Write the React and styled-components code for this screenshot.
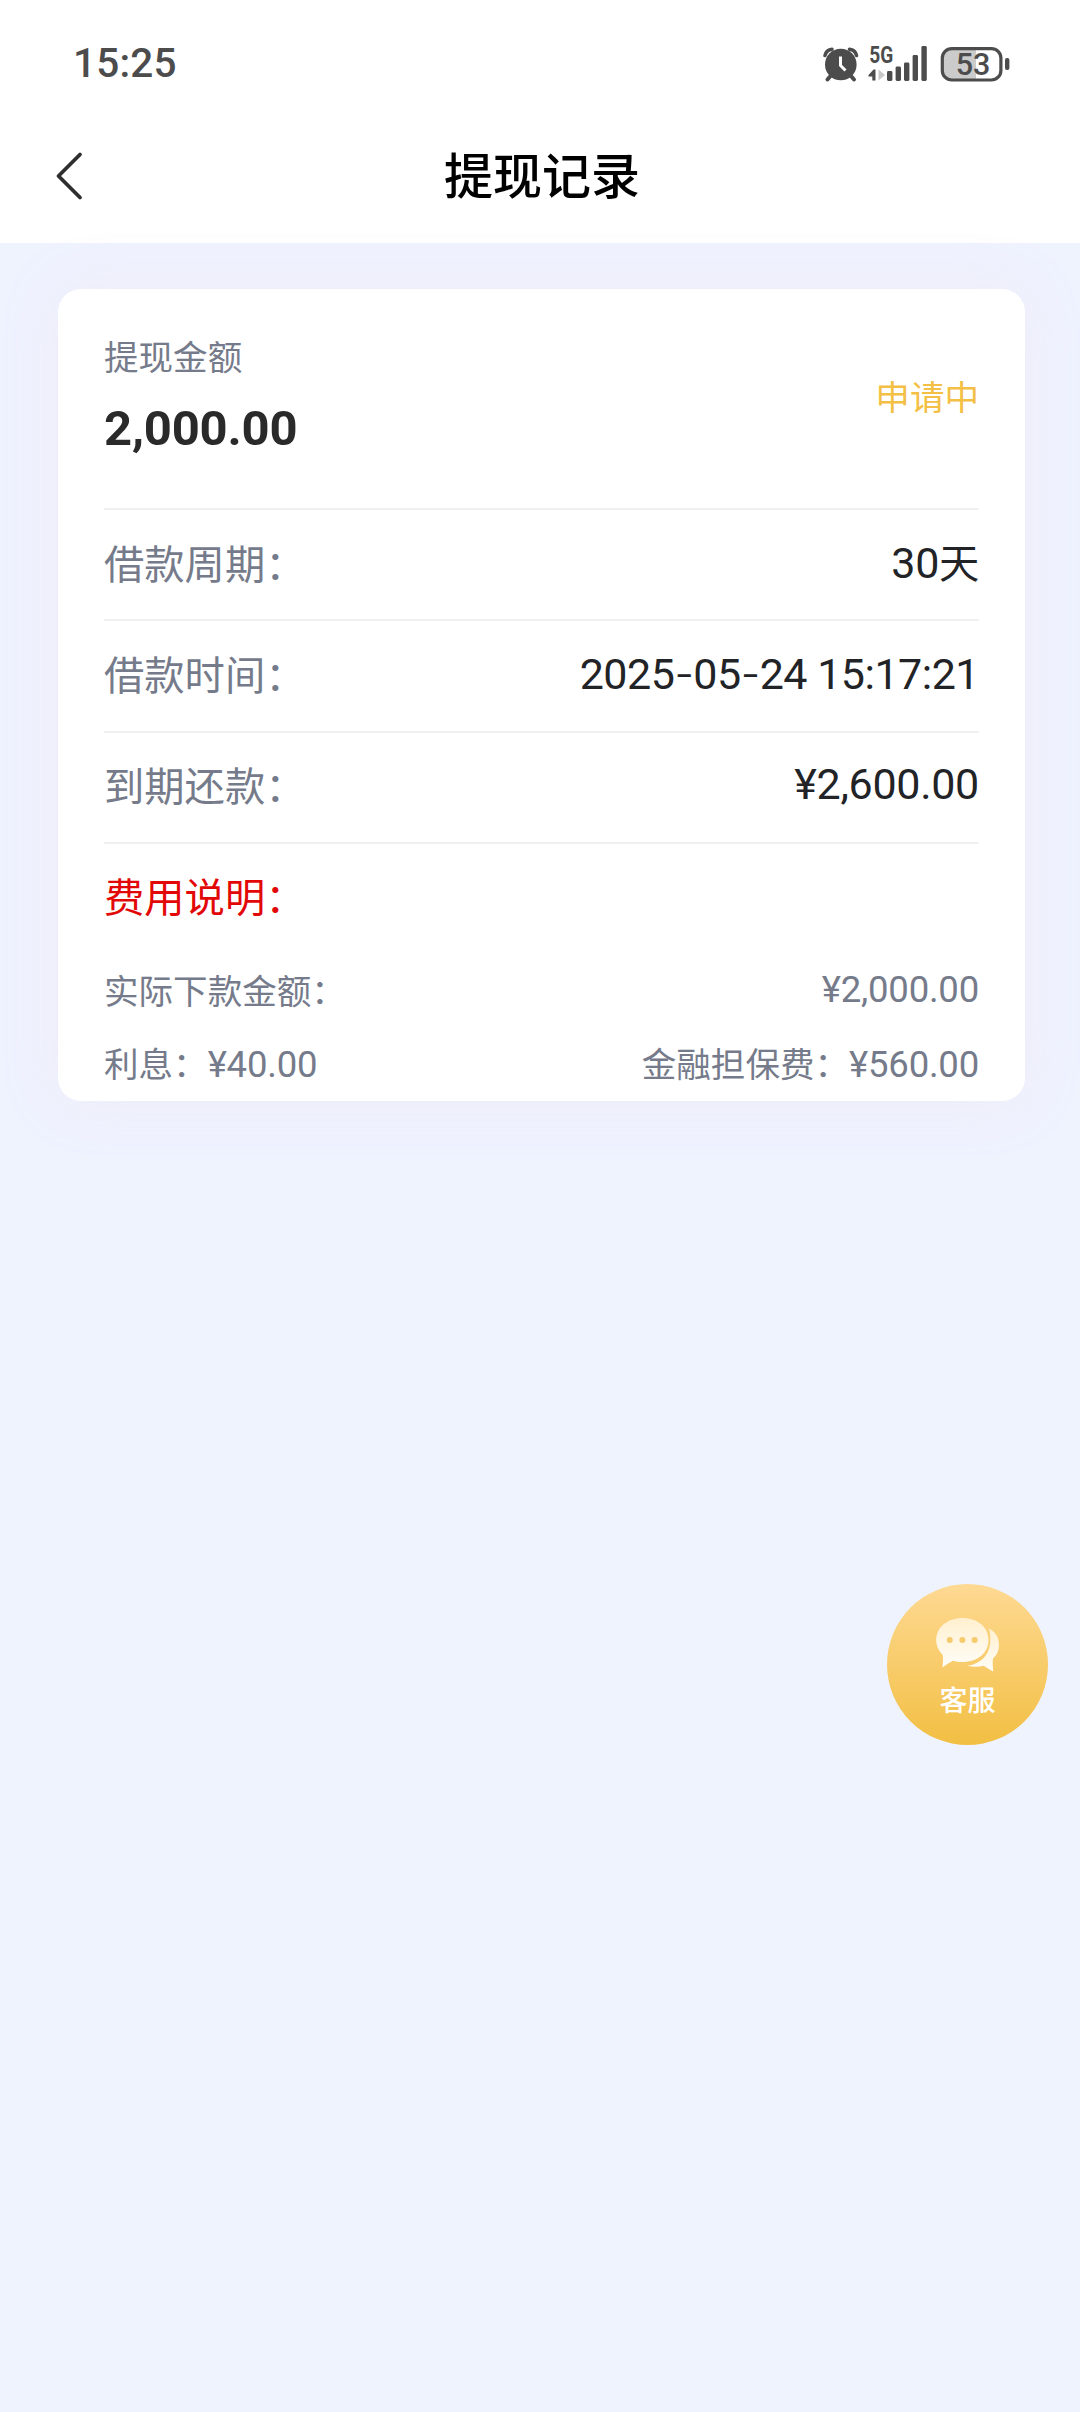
import styled, { createGlobalStyle } from "styled-components";

const details = [
  { label: "借款周期：", value: "30", unit: "天" },
  { label: "借款时间：", date: ["2025", "05", "24"], time: "15:17:21" },
  { label: "到期还款：", value: "¥2,600.00" },
];

const App = () => {
  return (
    <Page>
      <GlobalStyle />
      <TopArea>
        <StatusBar>
          <Clock>15:25</Clock>
          <StatusIcons />
        </StatusBar>
        <NavBar>
          <BackButton aria-label="返回">
            <svg width="30" height="50" viewBox="0 0 30 50" fill="none">
              <path
                d="M26 3.5 L4.5 25 L26 46.5"
                stroke="#2e2e2e"
                strokeWidth="3.8"
                strokeLinecap="round"
                strokeLinejoin="round"
              />
            </svg>
          </BackButton>
          <Title>提现记录</Title>
        </NavBar>
      </TopArea>

      <Card>
        <Summary>
          <div>
            <SummaryLabel>提现金额</SummaryLabel>
            <Amount>2,000.00</Amount>
          </div>
          <Status>申请中</Status>
        </Summary>

        {details.map((item) => (
          <Row key={item.label}>
            <Label>{item.label}</Label>
            {item.date ? (
              <DateValue>
                {item.date[0]}
                <Dash>-</Dash>
                {item.date[1]}
                <Dash>-</Dash>
                {item.date[2]} {item.time}
              </DateValue>
            ) : (
              <Value>
                {item.value}
                {item.unit && <Unit>{item.unit}</Unit>}
              </Value>
            )}
          </Row>
        ))}

        <FeeTitle>费用说明：</FeeTitle>
        <FeeRow>
          <span>实际下款金额：</span>
          <span>
            <FeeNumber>¥2,000.00</FeeNumber>
          </span>
        </FeeRow>
        <FeeRow>
          <span>
            利息：<FeeNumber>¥40.00</FeeNumber>
          </span>
          <span>
            金融担保费：<FeeNumber>¥560.00</FeeNumber>
          </span>
        </FeeRow>
      </Card>

      <ServiceButton>
        <ChatIcon />
        <span>客服</span>
      </ServiceButton>
    </Page>
  );
};

const StatusIcons = () => (
  <svg width="190" height="44" viewBox="820 40 190 44" fill="#4c4c4c">
    {/* 闹钟 */}
    <g>
      <circle cx="840.8" cy="63.5" r="15.8" />
      <path
        d="M825 54.5 A8 8 0 0 1 832 48.2"
        fill="none"
        stroke="#4c4c4c"
        strokeWidth="3.6"
        strokeLinecap="round"
      />
      <path
        d="M856.5 54.5 A8 8 0 0 0 849.5 48.2"
        fill="none"
        stroke="#4c4c4c"
        strokeWidth="3.6"
        strokeLinecap="round"
      />
      <path
        d="M830.5 75 L827.5 78.5 M851 75 L854 78.5"
        stroke="#4c4c4c"
        strokeWidth="4"
        strokeLinecap="round"
      />
      <path
        d="M840.5 55.5 V64.5 L845.5 69.5"
        fill="none"
        stroke="#fff"
        strokeWidth="3"
      />
    </g>
    {/* 信号 */}
    <SignalText x="869.2" y="62.3" textLength="24" lengthAdjust="spacingAndGlyphs">
      5G
    </SignalText>
    <path d="M868.5 74 L873.5 68.5 H875.5 V79.5 H872.3 V75.5 H868.5 Z" />
    <path d="M878.5 68.5 L885 74 L878.5 79.5 Z" fill="#c8c8c8" />
    <rect x="887" y="70" width="5.4" height="10" rx="1.4" />
    <rect x="895.6" y="65.5" width="5.4" height="14.5" rx="1.4" />
    <rect x="904" y="61.5" width="5.4" height="18.5" rx="1.4" />
    <rect x="912.6" y="54" width="5.4" height="26" rx="1.4" />
    <rect x="921.4" y="45" width="5.4" height="35" rx="1.4" />
    {/* 电池 */}
    <path d="M976 48 H952 Q942.5 48 942.5 57 V70 Q942.5 78.7 952 78.7 H976 Z" fill="#cbcbcb" />
    <rect
      x="942.3"
      y="47.6"
      width="58.6"
      height="31.4"
      rx="9.5"
      fill="none"
      stroke="#4c4c4c"
      strokeWidth="3.2"
    />
    <rect x="1005" y="57" width="4.4" height="12" rx="2" />
    <BatteryText x="973" y="73.6" textAnchor="middle">
      53
    </BatteryText>
  </svg>
);

const ChatIcon = () => (
  <svg width="66" height="56" viewBox="0 0 66 56">
    <defs>
      <linearGradient id="bubble" x1="0" y1="0" x2="0" y2="1">
        <stop offset="0" stopColor="#fff0cf" />
        <stop offset="1" stopColor="#fffdf8" />
      </linearGradient>
    </defs>
    <path
      d="M54 11.5 C61 15 64 21 64 28 C64 33.5 62 38 58 41.5 C57.5 45.5 57.8 50 58.3 54.5 C55 53 51.5 50.5 48.8 48.8 C43 50.2 38 50 32 48.8 C45 47.5 55 38 55.3 24 C55.5 19 55 15 54 11.5 Z"
      fill="url(#bubble)"
    />
    <path
      d="M27.5 1 C43 1 53.5 10.5 53.5 23 C53.5 35.5 43 45 27.5 45 C24 45 21 44.6 18 43.8 C14.5 45.5 11 47.8 7.5 50.5 C7.8 46 8.3 41.5 7.8 38 C3.8 34 1.2 29 1.2 23 C1.2 10.5 12.5 1 27.5 1 Z"
      fill="url(#bubble)"
    />
    <circle cx="14.8" cy="23" r="3" fill="#f6cb6e" />
    <circle cx="27.4" cy="23" r="3" fill="#f6cb6e" />
    <circle cx="39.6" cy="23" r="3" fill="#f6cb6e" />
  </svg>
);

export default App;

const GlobalStyle = createGlobalStyle`
  * {
    box-sizing: border-box;
  }
  body {
    margin: 0;
    background-color: #eff3fe;
    font-family: "Noto Sans CJK SC", sans-serif;
  }
`;

const Page = styled.div`
  min-height: 2412px;
  background-color: #eff3fe;
`;

const TopArea = styled.header`
  height: 243px;
  background-color: #fff;
`;

const StatusBar = styled.div`
  height: 109px;
  padding: 17px 70px 0 73px;
  display: flex;
  align-items: center;
  justify-content: space-between;
`;

const Clock = styled.span`
  font-family: Roboto, sans-serif;
  font-size: 40.5px;
  font-weight: 500;
  letter-spacing: 0.2px;
  color: #4c4c4c;
`;

const SignalText = styled.text`
  font-family: Roboto, sans-serif;
  font-size: 23.5px;
  font-weight: 700;
`;

const BatteryText = styled.text`
  font-family: Roboto, sans-serif;
  font-size: 30.5px;
  font-weight: 500;
`;

const NavBar = styled.div`
  height: 134px;
  padding: 0 50px 0 54px;
  display: grid;
  grid-template-columns: 60px 1fr 60px;
  align-items: center;
`;

const BackButton = styled.button`
  border: none;
  background: none;
  padding: 0;
  display: flex;
`;

const Title = styled.h1`
  margin: 0 0 6px;
  font-size: 49px;
  font-weight: 500;
  line-height: 70px;
  text-align: center;
  color: #000;
`;

const Card = styled.section`
  height: 812px;
  margin: 46px 55px 0 58px;
  padding: 0 46px;
  border-radius: 23px;
  background-color: #fff;
  box-shadow: 0 0 58px rgba(238, 234, 250, 0.9);
`;

const Summary = styled.div`
  height: 221px;
  padding-top: 44px;
  display: flex;
  justify-content: space-between;
  border-bottom: 2px solid #f0f0f0;
`;

const SummaryLabel = styled.div`
  font-size: 34.56px;
  line-height: 44px;
  color: #757b8a;
`;

const Amount = styled.div`
  margin-top: 19px;
  font-family: Roboto, sans-serif;
  font-size: 49px;
  font-weight: 700;
  line-height: 66px;
  letter-spacing: -0.2px;
  color: #2a2a2a;
`;

const Status = styled.div`
  margin-top: 38px;
  font-size: 34.56px;
  line-height: 48px;
  color: #f3bf45;
`;

const Row = styled.div`
  height: 111.4px;
  padding-bottom: 6px;
  display: flex;
  align-items: center;
  justify-content: space-between;
  border-bottom: 2px solid #f0f0f0;
`;

const Label = styled.span`
  font-size: 40.3px;
  line-height: 58px;
  color: #757b8a;
`;

const Value = styled.span`
  font-family: Roboto, "Noto Sans CJK SC", sans-serif;
  font-size: 43px;
  line-height: 58px;
  letter-spacing: -0.3px;
  color: #222326;
`;

const DateValue = styled(Value)`
  letter-spacing: -0.5px;
`;

const Dash = styled.span`
  font-family: Inter, sans-serif;
  font-weight: 300;
`;

const Unit = styled.span`
  font-family: "Noto Sans CJK SC", sans-serif;
  font-size: 40.3px;
`;

const FeeTitle = styled.div`
  height: 108px;
  font-size: 40.3px;
  line-height: 102px;
  color: #e30808;
`;

const FeeRow = styled.div`
  height: 74.5px;
  padding-bottom: 1px;
  display: flex;
  align-items: center;
  justify-content: space-between;
  font-size: 34.56px;
  line-height: 48px;
  color: #757b8a;
`;

const FeeNumber = styled.span`
  font-family: Roboto, sans-serif;
  font-size: 36.5px;
  letter-spacing: -0.2px;
`;

const ServiceButton = styled.button`
  position: fixed;
  top: 1584px;
  left: 887px;
  width: 161px;
  height: 161px;
  padding: 33px 0 0;
  border: none;
  border-radius: 50%;
  display: flex;
  flex-direction: column;
  align-items: center;
  gap: 6px;
  background: linear-gradient(#fed993, #f2bf43);
  color: #fff;
  font-family: "Noto Sans CJK SC", sans-serif;
  font-size: 28px;
  font-weight: 500;
  line-height: 40px;
`;
